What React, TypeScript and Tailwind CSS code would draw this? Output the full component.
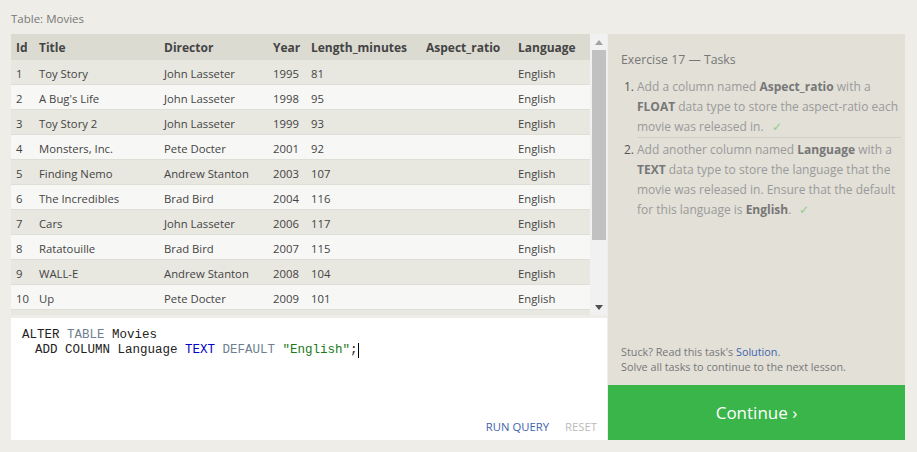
import React from "react"

const movies = [
  [1, "Toy Story", "John Lasseter", 1995, 81],
  [2, "A Bug's Life", "John Lasseter", 1998, 95],
  [3, "Toy Story 2", "John Lasseter", 1999, 93],
  [4, "Monsters, Inc.", "Pete Docter", 2001, 92],
  [5, "Finding Nemo", "Andrew Stanton", 2003, 107],
  [6, "The Incredibles", "Brad Bird", 2004, 116],
  [7, "Cars", "John Lasseter", 2006, 117],
  [8, "Ratatouille", "Brad Bird", 2007, 115],
  [9, "WALL-E", "Andrew Stanton", 2008, 104],
  [10, "Up", "Pete Docter", 2009, 101],
]

const cols = "grid grid-cols-[23px_125px_109px_38px_115px_92px_1fr] pl-[5px]"

export default function App() {
  return (
    <div
      className="w-[917px] h-[452px] bg-[#efede7] overflow-hidden text-[12px] text-[#444]"
      style={{ fontFamily: '"Open Sans", sans-serif' }}
    >
      <div className="pl-[11px] pt-[10px] h-[34px] text-[11.5px] text-[#777]">Table: Movies</div>

      <div className="flex">
        <div className="w-[596px] ml-[11px] flex flex-col">
          {/* table */}
          <div className="flex h-[281px] bg-[#e8e7e0]">
            <div className="w-[579px] flex flex-col">
              <div className={`${cols} h-[26px] pt-[2px] items-center bg-[#dcdbd2] font-bold text-[#444]`}>
                <span>Id</span>
                <span>Title</span>
                <span>Director</span>
                <span>Year</span>
                <span>Length_minutes</span>
                <span>Aspect_ratio</span>
                <span>Language</span>
              </div>
              {movies.map((m, i) => (
                <div
                  key={i}
                  className={`${cols} h-[25px] pt-[4px] items-center text-[11.3px] border-b border-[#dfded6] ${
                    i % 2 === 0 ? "bg-[#e8e7e0]" : "bg-[#f7f7f5]"
                  }`}
                >
                  <span>{m[0]}</span>
                  <span>{m[1]}</span>
                  <span>{m[2]}</span>
                  <span>{m[3]}</span>
                  <span>{m[4]}</span>
                  <span></span>
                  <span>English</span>
                </div>
              ))}
            </div>
            {/* scrollbar */}
            <div className="w-[17px] bg-[#f1f1f1] flex flex-col items-center">
              <div className="h-[16px] flex items-center justify-center">
                <svg width="8" height="5" viewBox="0 0 8 5"><path d="M4 0L8 5H0z" fill="#a3a3a3" /></svg>
              </div>
              <div className="w-[14px] h-[190px] bg-[#c1c1c1]" />
              <div className="flex-1" />
              <div className="h-[16px] flex items-center justify-center">
                <svg width="8" height="5" viewBox="0 0 8 5"><path d="M0 0H8L4 5z" fill="#505050" /></svg>
              </div>
            </div>
          </div>

          {/* editor */}
          <div className="mt-[3px] h-[122px] bg-white flex flex-col">
            <div
              className="pl-[11px] pt-[10px] text-[12.5px] leading-[15px] text-[#222] flex-1"
              style={{ fontFamily: '"Liberation Mono", monospace' }}
            >
              <div>
                ALTER <span className="text-[#708090]">TABLE</span> Movies
              </div>
              <div className="pl-[13px]">
                ADD COLUMN Language <span className="text-[#0000c8]">TEXT</span>{" "}
                <span className="text-[#708090]">DEFAULT</span>{" "}
                <span className="text-[#1a7a1a]">"English"</span>;
                <span className="inline-block w-px h-[15px] bg-black align-top" />
              </div>
            </div>
            <div className="flex justify-end gap-[16px] pr-[10px] pb-[4px] text-[11.3px]">
              <span className="text-[#3f63ad]">RUN QUERY</span>
              <span className="text-[#bbbbbb]">RESET</span>
            </div>
          </div>
        </div>

        {/* tasks panel */}
        <div className="w-[297px] ml-px h-[406px] bg-[#e2e0d7] flex flex-col">
          <div className="flex-1 pl-[13px] pr-[4px] pt-[17px]">
            <div className="text-[12.3px] text-[#777]">Exercise 17 — Tasks</div>
            <ol className="mt-[8px] text-[12px] leading-[20px] text-[#9a9a9a]">
              <li className="flex">
                <span className="w-[16px] shrink-0 pl-[3px] text-[#555]">1.</span>
                <span className="block flex-1 pr-[3px] border-b border-[#d2d0c7]">
                  Add a column named <b className="text-[#777]">Aspect_ratio</b> with a{" "}
                  <b className="text-[#777]">FLOAT</b> data type to store the aspect-ratio each movie was released in.
                  <span className="inline-block leading-none text-[#8fcf8f] ml-[8px]">✓</span>
                </span>
              </li>
              <li className="flex pt-[2px]">
                <span className="w-[16px] shrink-0 pl-[3px] text-[#555]">2.</span>
                <span className="block flex-1">
                  Add another column named <b className="text-[#777]">Language</b> with a{" "}
                  <b className="text-[#777]">TEXT</b> data type to store the language that the movie was released in.
                  Ensure that the default for this language is <b className="text-[#777]">English</b>.
                  <span className="inline-block leading-none text-[#8fcf8f] ml-[8px]">✓</span>
                </span>
              </li>
            </ol>
          </div>
          <div className="px-[13px] pb-[11px] text-[10.8px] leading-[15px] text-[#777]">
            <div>
              Stuck? Read this task's <span className="text-[#3f63ad]">Solution</span>.
            </div>
            <div>Solve all tasks to continue to the next lesson.</div>
          </div>
          <div className="h-[55px] bg-[#3ab54a] flex items-center justify-center text-white text-[17px]">
            Continue ›
          </div>
        </div>
      </div>
    </div>
  )
}
